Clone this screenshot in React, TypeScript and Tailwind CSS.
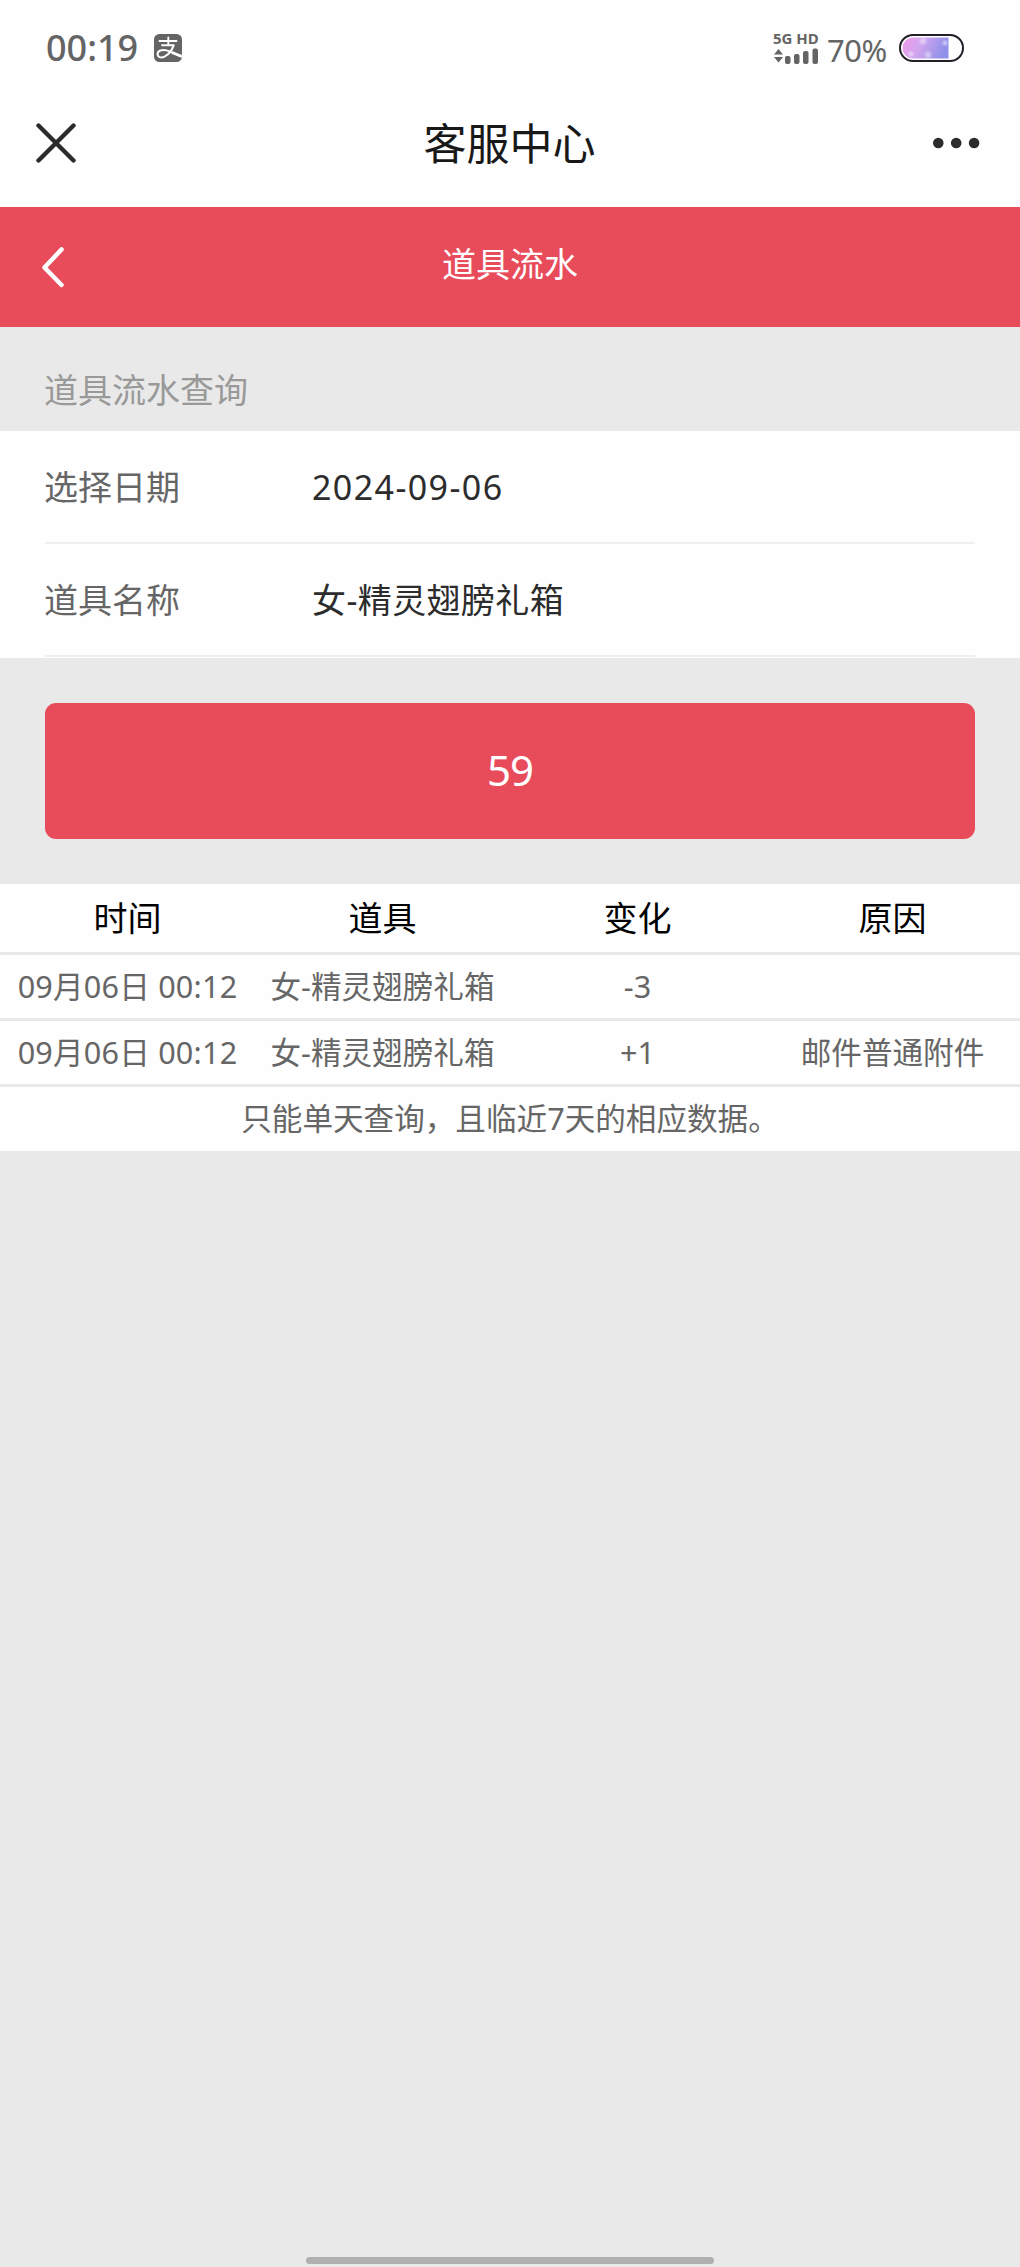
import * as React from 'react';
import { clsx } from 'clsx';

interface LogEntry {
  time: string;
  item: string;
  change: string;
  reason: string;
}

const columns = ['时间', '道具', '变化', '原因'];

const entries: LogEntry[] = [
  { time: '09月06日 00:12', item: '女-精灵翅膀礼箱', change: '-3', reason: '' },
  { time: '09月06日 00:12', item: '女-精灵翅膀礼箱', change: '+1', reason: '邮件普通附件' },
];

function AlipayIcon() {
  return (
    <svg width="28" height="28" viewBox="0 0 28 28" fill="none" stroke="#fff" strokeLinecap="round">
      <rect width="28" height="28" rx="5.5" fill="#646464" stroke="none" />
      <path d="M5.5 7 H22.500 M14.300 3.500 V11 M8 11.200 H19.500" strokeWidth="1.900" />
      <path d="M19.600 11.400 C18 16.500 14.500 20.500 10.500 22.600 C7 24.300 3.600 23.200 3.600 20 C3.600 16.600 8 15.200 12.500 16.400 C17.500 17.800 22 20.600 27.500 22.300" strokeWidth="2" />
      <path d="M18 18.500 L27.800 22.400" strokeWidth="2.800" strokeLinecap="butt" />
    </svg>
  );
}

function SignalIcon() {
  return (
    <svg width="46" height="16" viewBox="0 0 46 16" className="fill-[#646464]">
      <path d="M5.5 1 L10 6.5 H1 Z M1 9 H10 L5.5 14.5 Z" />
      <rect x="12" y="8" width="5.5" height="8" rx="2" />
      <rect x="21" y="6" width="5.5" height="10" rx="2" />
      <rect x="30" y="3" width="5.5" height="13" rx="2" />
      <rect x="39.5" y="0.5" width="5.5" height="15.5" rx="2" />
    </svg>
  );
}

function BatteryIcon() {
  return (
    <svg width="66" height="28" viewBox="0 0 66 28">
      <defs>
        <linearGradient id="charge" x1="0" x2="1" y1="0" y2="0.2">
          <stop offset="0" stopColor="#f39bea" />
          <stop offset="0.45" stopColor="#cfa6ee" />
          <stop offset="1" stopColor="#9090ea" />
        </linearGradient>
        <radialGradient id="spark">
          <stop offset="0" stopColor="#fff" stopOpacity="0.55" />
          <stop offset="1" stopColor="#fff" stopOpacity="0" />
        </radialGradient>
      </defs>
      <path d="M14 3.5 H49.5 V24.5 H14 A10.5 10.5 0 0 1 14 3.5 Z" fill="url(#charge)" />
      <circle cx="24" cy="7" r="5" fill="url(#spark)" />
      <circle cx="29" cy="21" r="5" fill="url(#spark)" />
      <circle cx="12" cy="20" r="4" fill="url(#spark)" />
      <circle cx="46" cy="9" r="4" fill="url(#spark)" />
      <rect x="1" y="1" width="63" height="26" rx="13" fill="none" stroke="#221f28" strokeWidth="2" />
    </svg>
  );
}

function StatusBar() {
  return (
    <div className="flex h-[86px] items-start justify-between pr-[55px] pl-[46px] text-[#646464]">
      <div className="flex pt-[34px]">
        <span className="w-[108px] text-[36px] leading-7 font-medium">00:19</span>
        <AlipayIcon />
      </div>
      <div className="flex pt-8">
        <div className="flex w-[54px] flex-col">
          <span className="h-4 text-[15px] leading-3 font-bold whitespace-nowrap">5G HD</span>
          <SignalIcon />
        </div>
        <span className="w-[72px] pt-[3px] text-[31px] leading-[30px] tracking-[-0.5px]">70%</span>
        <div className="pt-[2px]">
          <BatteryIcon />
        </div>
      </div>
    </div>
  );
}

function NavBar() {
  return (
    <div className="flex h-[121px] items-start justify-between pr-[37px] pl-9">
      <svg width="52" height="40" viewBox="0 0 52 40" className="mt-[37px]" fill="none" stroke="#2b2b2b" strokeWidth="4.4">
        <path d="M2.5 2.5 L37.5 37.5 M37.5 2.5 L2.5 37.5" strokeLinecap="round" />
      </svg>
      <h1 className="mt-[31px] text-[43px] leading-[54px] text-[#181818]">客服中心</h1>
      <svg width="52" height="12" viewBox="0 0 52 12" className="mt-[51px]" fill="#2b2b2b">
        <circle cx="7.3" cy="6" r="5.3" />
        <circle cx="25.2" cy="6" r="5.3" />
        <circle cx="43.1" cy="6" r="5.3" />
      </svg>
    </div>
  );
}

function FormRow({ label, value, wide }: { label: string; value: string; wide?: boolean }) {
  return (
    <div className="mx-[45px] flex h-[113px] items-center border-b-2 border-[#efefef] pt-[2px] text-[34px]">
      <span className="-ml-px w-[268px] text-[#666]">{label}</span>
      <span className={clsx('text-[#2c2c2c]', wide ? 'tracking-[1.4px]' : 'tracking-[0.4px]')}>{value}</span>
    </div>
  );
}

function Cell({ children, head }: { children?: React.ReactNode; head?: boolean }) {
  return (
    <div className={clsx('text-center whitespace-nowrap', head ? 'text-[34px] text-black' : 'text-[30.6px] text-[#666]')}>
      {children}
    </div>
  );
}

export default function App() {
  return (
    <div className="flex h-[2267px] w-[1020px] flex-col bg-[#e9e9e9] font-['Noto_Sans','Noto_Sans_CJK_SC',sans-serif]">
      <div className="bg-[#fefefe]">
        <StatusBar />
        <NavBar />
      </div>

      <div className="grid h-[120px] grid-cols-[1fr_auto_1fr] bg-[#e84c5b] px-10 text-white">
        <svg width="26" height="42" viewBox="0 0 26 42" className="mt-[39px]" fill="none" stroke="#fff" strokeWidth="4.5">
          <path d="M21.5 3.5 L4.5 21.5 L21.5 39" strokeLinecap="round" strokeLinejoin="round" />
        </svg>
        <h2 className="pt-8 text-[34px] leading-[50px]">道具流水</h2>
      </div>

      <div className="h-[104px] pt-[38px] pl-11 text-[34px] leading-[50px] text-[#999]">道具流水查询</div>

      <div className="h-[227px] bg-[#fefefe]">
        <FormRow label="选择日期" value="2024-09-06" wide />
        <FormRow label="道具名称" value="女-精灵翅膀礼箱" />
      </div>

      <button className="mx-[45px] mt-[45px] h-[136px] rounded-[11px] bg-[#e84c5b] pb-[3px] text-[42px] tracking-[-1px] text-white">
        59
      </button>

      <div className="mt-[45px]">
        <div className="grid h-[71px] grid-cols-4 items-center border-b-3 border-[#e9e9e9] bg-[#fefefe]">
          {columns.map((name) => (
            <Cell key={name} head>
              {name}
            </Cell>
          ))}
        </div>
        {entries.map((entry, idx) => (
          <div key={idx} className="grid h-[66px] grid-cols-4 items-center border-b-3 border-[#e9e9e9] bg-[#fefefe]">
            <Cell>
              <span className="tracking-[0.2px]">{entry.time}</span>
            </Cell>
            <Cell>{entry.item}</Cell>
            <Cell>{entry.change}</Cell>
            <Cell>{entry.reason}</Cell>
          </div>
        ))}
        <div className="flex h-[64px] items-center justify-center bg-[#fefefe] text-[30.6px] text-[#666]">
          只能单天查询，且临近7天的相应数据。
        </div>
      </div>

      <div className="mt-auto mb-[3px] h-[7px] w-[408px] self-center rounded-full bg-[#b0b0b0]" />
    </div>
  );
}
